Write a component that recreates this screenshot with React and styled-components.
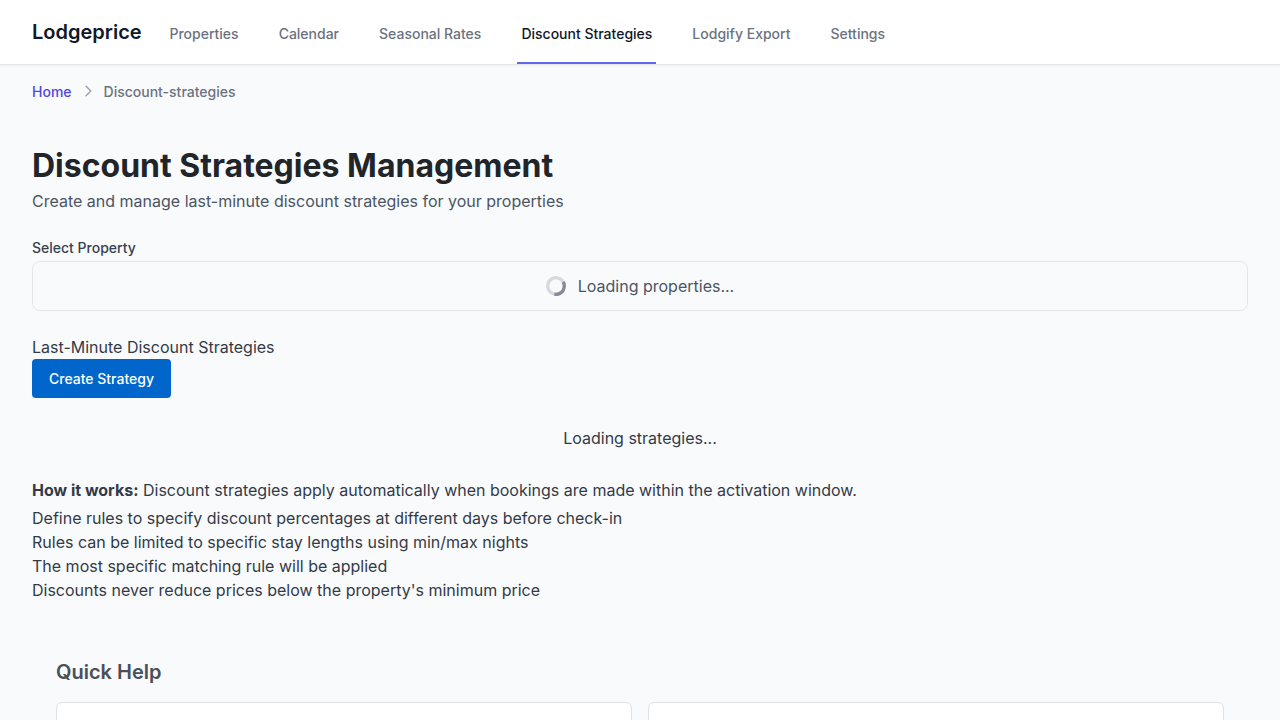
import React from "react";
import styled, { createGlobalStyle } from "styled-components";

const GlobalStyle = createGlobalStyle`
  *, *::before, *::after { box-sizing: border-box; }
  html, body { margin: 0; height: 100%; overflow: hidden; }
  body {
    background: #f9fafc;
    color: #374151;
    font: 400 16px/24px Inter, sans-serif;
  }
  h1, h2, p, ul { margin: 0; padding: 0; }
`;

const Page = styled.div`
  height: 100vh;
  overflow: hidden;
  background: #f9fafc;
`;

const NavBar = styled.nav`
  display: flex;
  height: 65px;
  padding: 0 32px;
  background: #fff;
  border-bottom: 1px solid #e5e7eb;
  box-shadow: 0 1px 2px rgba(0, 0, 0, 0.05);
`;

const Brand = styled.div`
  display: flex;
  align-items: center;
  font-size: 20px;
  font-weight: 600;
  line-height: 28px;
  color: #111827;
`;

const NavLinks = styled.div`
  display: flex;
  gap: 32px;
  margin-left: 23.8px;
`;

const NavLink = styled.a`
  display: flex;
  align-items: center;
  padding: 6px 4px 0;
  font-size: 14px;
  font-weight: 500;
  line-height: 20px;
  color: ${(p) => (p.$active ? "#111827" : "#6b7280")};
  border-bottom: 2px solid ${(p) => (p.$active ? "#6366f1" : "transparent")};
`;

const Breadcrumb = styled.div`
  display: flex;
  align-items: center;
  padding: 17px 32px 15px;
  font-size: 14px;
  font-weight: 500;
  line-height: 20px;
  color: #6b7280;
`;

const Crumb = styled.a`
  color: #4f46e5;
`;

const Chevron = styled.svg`
  width: 20px;
  height: 20px;
  margin: -2px 6px 0;
  color: #9ca3af;
`;

const Main = styled.main`
  padding: 29px 32px 0;
`;

const Title = styled.h1`
  font-size: 32px;
  font-weight: 700;
  line-height: 40px;
  color: #212529;
`;

const Subtitle = styled.p`
  margin-top: 3px;
  color: #4b5563;
`;

const FieldLabel = styled.div`
  margin-top: 25px;
  font-size: 14px;
  font-weight: 500;
  line-height: 20px;
  color: #374151;
`;

const LoadingBox = styled.div`
  display: flex;
  align-items: center;
  justify-content: center;
  height: 50px;
  margin-top: 3px;
  border: 1px solid #e5e7eb;
  border-radius: 8px;
  color: #4b5563;
`;

const Spinner = styled.svg`
  width: 20px;
  height: 20px;
  margin-right: 12px;
  color: #6b7280;
  transform: rotate(191deg);
`;

const Strategies = styled.section`
  margin-top: 24px;
  color: #333a47;
`;

const Button = styled.button`
  display: block;
  height: 39px;
  padding: 0 17px;
  border: 0;
  border-radius: 4px;
  background: #0066cc;
  color: #fff;
  font: 500 14px/21px Inter, sans-serif;
`;

const LoadingText = styled.p`
  padding: 28px 0;
  text-align: center;
`;

const RuleList = styled.ul`
  margin-top: 4px;
  list-style: none;
`;

const Help = styled.section`
  margin-top: 32px;
  padding: 24px;
`;

const HelpTitle = styled.h2`
  font-size: 20px;
  font-weight: 600;
  line-height: 28px;
  color: #495057;
`;

const HelpGrid = styled.div`
  display: grid;
  grid-template-columns: 1fr 1fr;
  gap: 16px;
  margin-top: 16px;
`;

const HelpCard = styled.div`
  height: 140px;
  background: #fff;
  border: 1px solid #dee2e6;
  border-radius: 6px;
`;

const links = ["Properties", "Calendar", "Seasonal Rates", "Discount Strategies", "Lodgify Export", "Settings"];

const rules = [
  "Define rules to specify discount percentages at different days before check-in",
  "Rules can be limited to specific stay lengths using min/max nights",
  "The most specific matching rule will be applied",
  "Discounts never reduce prices below the property's minimum price",
];

export default function App() {
  return (
    <Page>
      <GlobalStyle />
      <NavBar>
        <Brand>Lodgeprice</Brand>
        <NavLinks>
          {links.map((label) => (
            <NavLink key={label} $active={label === "Discount Strategies"}>{label}</NavLink>
          ))}
        </NavLinks>
      </NavBar>
      <Breadcrumb>
        <Crumb>Home</Crumb>
        <Chevron viewBox="0 0 20 20" fill="none" stroke="currentColor" strokeWidth="1.5" strokeLinecap="round" strokeLinejoin="round">
          <path d="M8 5.2l4.8 4.8-4.8 4.8" />
        </Chevron>
        <span>Discount-strategies</span>
      </Breadcrumb>
      <Main>
        <Title>Discount Strategies Management</Title>
        <Subtitle>Create and manage last-minute discount strategies for your properties</Subtitle>
        <FieldLabel>Select Property</FieldLabel>
        <LoadingBox>
          <Spinner viewBox="0 0 24 24" fill="none">
            <circle cx="12" cy="12" r="10" stroke="currentColor" strokeWidth="4" opacity="0.25" />
            <path
              fill="currentColor"
              opacity="0.75"
              d="M4 12a8 8 0 018-8V0C5.373 0 0 5.373 0 12h4zm2 5.291A7.962 7.962 0 014 12H0c0 3.042 1.135 5.824 3 7.938l3-2.647z"
            />
          </Spinner>
          <span>Loading properties...</span>
        </LoadingBox>
        <Strategies>
          <div>Last-Minute Discount Strategies</div>
          <Button>Create Strategy</Button>
          <LoadingText>Loading strategies...</LoadingText>
          <p>
            <strong>How it works:</strong> Discount strategies apply automatically when bookings are made within the activation window.
          </p>
          <RuleList>
            {rules.map((rule) => (
              <li key={rule}>{rule}</li>
            ))}
          </RuleList>
        </Strategies>
        <Help>
          <HelpTitle>Quick Help</HelpTitle>
          <HelpGrid>
            <HelpCard />
            <HelpCard />
          </HelpGrid>
        </Help>
      </Main>
    </Page>
  );
}
